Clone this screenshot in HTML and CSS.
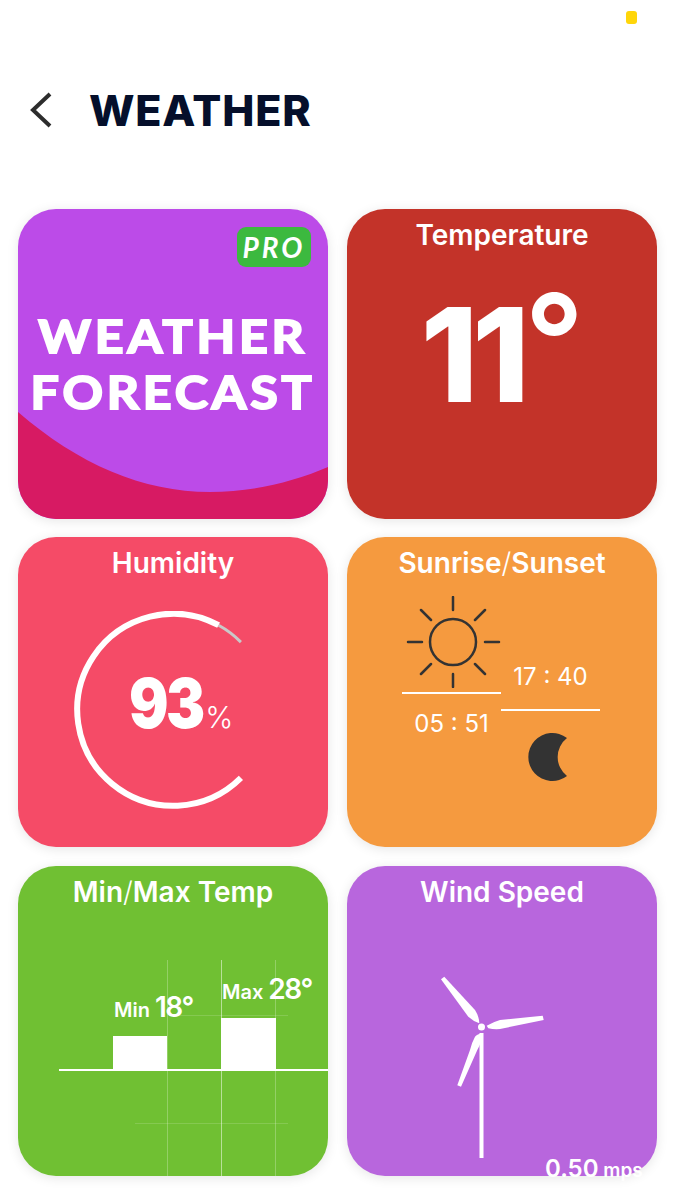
FILE: index.html
```html
<!DOCTYPE html>
<html lang="en">
<head>
    <title>Weather</title>
    <link rel="stylesheet" href="styles.css">
</head>
<body>
    <div class="status"><span class="status-dot"></span></div>
    <header class="top">
        <svg class="back" width="22" height="36" viewBox="0 0 22 36"><path d="M20 2 L3 18 L20 34" /></svg>
        <h1>WEATHER</h1>
    </header>
    <main class="grid">
        <section class="card promo">
            <svg class="wave" width="310" height="310" viewBox="0 0 310 310"><path d="M0 203 C60 255 125 283 192 283 C235 283 275 273 310 258 V310 H0 Z" /></svg>
            <span class="pro">PRO</span>
            <div class="promo-text">WEATHER<br>FORECAST</div>
        </section>

        <section class="card temp">
            <h2>Temperature</h2>
            <div class="temp-value">11<span class="temp-deg">°</span></div>
        </section>

        <section class="card humidity">
            <h2>Humidity</h2>
            <div class="ring">
                <svg width="198" height="198" viewBox="0 0 198 198">
                    <path class="ring-rest" d="M144.6 14.2 A96 96 0 0 1 166.9 31.1" />
                    <path class="ring-full" d="M144.6 14.2 A96 96 0 1 0 166.9 166.9" />
                </svg>
                <div class="ring-value"><span class="ring-num">93</span><small>%</small></div>
            </div>
        </section>

        <section class="card sun">
            <h2>Sunrise<span class="slash">/</span>Sunset</h2>
            <div class="sun-row">
                <div class="sun-col">
                    <svg class="sun-icon" width="99" height="92" viewBox="0 0 99 92">
                        <circle cx="51" cy="46" r="23" />
                        <path d="M51 1 V14 M51 78 V91 M6 46 H20 M83 46 H97 M19 14 L29 24 M83 14 L73 24 M19 78 L29 68 M83 78 L73 68" />
                    </svg>
                    <div class="time time-below">05 : 51</div>
                </div>
                <div class="sun-col sun-col-late">
                    <div class="time time-above">17 : 40</div>
                    <svg class="moon" width="39" height="48" viewBox="0 0 39 48"><path d="M39 5 A24 24 0 1 0 39 43 A24 24 0 0 1 39 5 Z" /></svg>
                </div>
            </div>
        </section>

        <section class="card minmax">
            <h2>Min<span class="slash">/</span>Max Temp</h2>
            <svg class="canvas" width="310" height="310" viewBox="0 0 310 310">
                <path class="grid-faint" d="M158 149.5 H270 M117 257.5 H270" />
                <path class="grid-line" d="M149.5 94 V310 M257.5 94 V310" />
                <path class="grid-mid" d="M203.5 94 V310" />
                <rect class="bar" x="95" y="170" width="54" height="34" />
                <rect class="bar" x="203" y="152" width="55" height="52" />
                <rect class="bar" x="41" y="203" width="269" height="2" />
                <text x="96" y="151"><tspan class="label">Min </tspan><tspan class="degrees">18°</tspan></text>
                <text x="204" y="133"><tspan class="label">Max </tspan><tspan class="degrees">28°</tspan></text>
            </svg>
        </section>

        <section class="card wind">
            <h2>Wind Speed</h2>
            <svg class="canvas" width="310" height="310" viewBox="0 0 310 310">
                <circle class="bar" cx="134.5" cy="161" r="3.5" />
                <rect class="bar" x="132.5" y="167" width="4" height="125" />
                <path class="bar" d="M94 113.3 L97.3 110.7 L128 144 Q132 150 132.3 157.3 Q126 155 121.3 150.7 Z" />
                <path class="bar" d="M139.7 159.7 Q146 156 153 154 L195.7 149.7 L196.7 154 L153 163 Q147 163.5 141.3 162.3 Z" />
                <path class="bar" d="M110.3 219.3 L114 220.7 L130.3 184 Q135 176 135.7 167.3 Q130 168 128 170.7 Q125 176 123 184 Z" />
                <text x="198" y="311"><tspan class="speed">0.50</tspan><tspan class="unit"> mps</tspan></text>
            </svg>
        </section>
    </main>
</body>
</html>
```

FILE: styles.css
```css
* {
    margin: 0;
    padding: 0;
    box-sizing: border-box;
}
body {
    background: #fff;
    color: #fff;
    font-family: Inter, "Liberation Sans", sans-serif;
    width: 675px;
    height: 1200px;
    overflow: hidden;
}
.status {
    display: flex;
    justify-content: flex-end;
    height: 91px;
    padding: 11px 38px 0 0;
}
.status-dot {
    width: 11px;
    height: 13px;
    border-radius: 3px;
    background: #ffd60a;
}
.top {
    display: flex;
    align-items: center;
    gap: 37px;
    height: 38px;
    padding-left: 30px;
}
.back {
    fill: none;
    stroke: #2d2d2d;
    stroke-width: 4;
}
h1 {
    font-size: 43px;
    font-weight: 800;
    letter-spacing: 0.8px;
    color: #050f2b;
}
.grid {
    display: grid;
    grid-template-columns: 310px 310px;
    grid-auto-rows: 310px;
    column-gap: 19px;
    row-gap: 18.5px;
    margin: 79.75px 0 0 18px;
}
.card {
    position: relative;
    border-radius: 38px;
    box-shadow: 0 2px 12px rgba(0, 0, 0, 0.1);
}
h2 {
    font-size: 28px;
    line-height: 36px;
    padding-top: 8px;
    font-weight: 600;
    text-align: center;
}
.slash {
    font-weight: 300;
}

/* promo card */
.promo {
    background: #bc4be8;
    overflow: hidden;
}
.wave {
    position: absolute;
    top: 0;
    left: 0;
    fill: #d71a63;
}
.pro {
    position: absolute;
    top: 18px;
    right: 17px;
    width: 74px;
    height: 40px;
    border-radius: 9px;
    background: #3cb93f;
    font: italic 700 28px/40px Lato, sans-serif;
    letter-spacing: 3px;
    text-align: center;
}
.promo-text {
    position: relative;
    padding-top: 99px;
    font: 700 46px/56px Lato, sans-serif;
    -webkit-text-stroke: 2px #fff;
    letter-spacing: 3.5px;
    text-align: center;
    transform: scaleX(1.09);
}

/* temperature */
.temp {
    background: #c33329;
}
.temp-value {
    font-size: 130px;
    line-height: 130px;
    font-weight: 800;
    letter-spacing: -6px;
    text-align: center;
    margin-top: 37px;
}
.temp-deg {
    display: inline-block;
    font-weight: 600;
    letter-spacing: 0;
    transform: translate(1px, -15px);
}

/* humidity */
.humidity {
    background: #f54b67;
}
.ring {
    display: grid;
    place-items: center;
    width: 198px;
    height: 198px;
    margin: 30px auto 0;
}
.ring svg, .ring-value {
    grid-area: 1 / 1;
}
.ring-full {
    fill: none;
    stroke: #fff;
    stroke-width: 6;
}
.ring-rest {
    fill: none;
    stroke: #c9c9c9;
    stroke-width: 3;
}
.ring-value {
    font-size: 69px;
    font-weight: 900;
    margin-bottom: 14px;
}
.ring-num {
    display: inline-block;
    letter-spacing: -3px;
    transform: translateX(3px) scaleX(0.85);
    transform-origin: right;
}
.ring-value small {
    font-size: 30px;
    font-weight: 300;
    margin-left: 6px;
}

/* sunrise / sunset */
.sun {
    background: #f59a3f;
}
.sun-row {
    display: flex;
    padding: 15px 0 0 55px;
}
.sun-col {
    display: flex;
    flex-direction: column;
    align-items: center;
    width: 99px;
}
.sun-col-late {
    padding-top: 66px;
}
.sun-icon {
    fill: none;
    stroke: #333;
    stroke-width: 2.5;
    stroke-linecap: round;
}
.time {
    width: 100%;
    font-size: 24px;
    line-height: 30px;
    text-align: center;
}
.time-below {
    margin-top: 4px;
    padding-top: 15px;
    border-top: 2px solid #fff;
}
.time-above {
    padding-bottom: 17px;
    border-bottom: 2px solid #fff;
}
.moon {
    fill: #333;
    margin: 22px 6px 0 0;
}

/* charts drawn on a free canvas */
.minmax {
    background: #70c033;
}
.wind {
    background: #b866dd;
}
.canvas {
    position: absolute;
    top: 0;
    left: 0;
    overflow: visible;
}
.minmax .canvas {
    overflow: hidden;
    border-radius: 38px;
}
.canvas text {
    fill: #fff;
}
.bar {
    fill: #fff;
}
.grid-line, .grid-mid, .grid-faint {
    fill: none;
    stroke: #fff;
    stroke-width: 1;
}
.grid-line {
    stroke-opacity: 0.25;
}
.grid-mid {
    stroke-opacity: 0.5;
}
.grid-faint {
    stroke-opacity: 0.15;
}
.label {
    font-size: 20px;
    font-weight: 600;
}
.degrees {
    font-size: 28px;
    font-weight: 600;
    letter-spacing: -1.5px;
}
.speed {
    font-size: 24px;
    font-weight: 600;
}
.unit {
    font-size: 19px;
    font-weight: 600;
}
```
